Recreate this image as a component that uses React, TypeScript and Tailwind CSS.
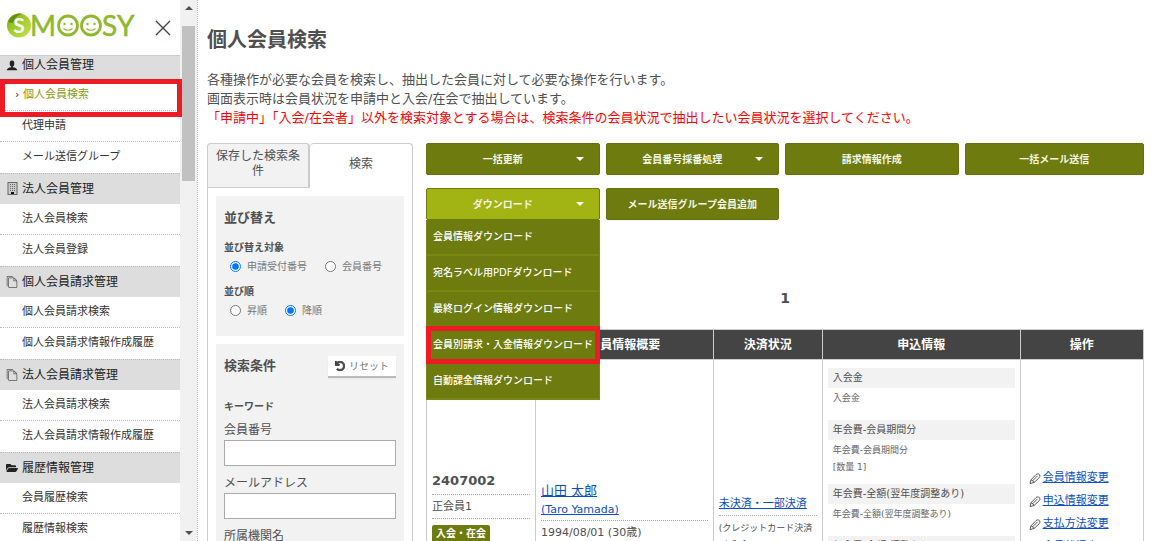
import type { ReactNode } from 'react'
import clsx from 'clsx'
import { FaFolderOpen, FaUndo } from 'react-icons/fa'
import { ImFilesEmpty, ImUser } from 'react-icons/im'

interface MenuGroup {
  title: string
  icon: ReactNode
  items: string[]
}

function BuildingIcon() {
  return (
    <svg viewBox="0 0 11 13" className="w-[11px] h-[13px]" fill="none">
      <rect x="1" y="0.5" width="9" height="12" fill="#ccc" stroke="#666" />
      <path
        d="M3 2.500h1M5 2.500h1M7 2.500h1M3 4.500h1M5 4.500h1M7 4.500h1M3 6.500h1M5 6.500h1M7 6.500h1M3 8.500h1M5 8.500h1M7 8.500h1"
        stroke="#666"
      />
      <rect x="4" y="10" width="3" height="2" fill="#111" />
    </svg>
  )
}

function PencilIcon() {
  return (
    <svg
      viewBox="0 0 12 12"
      className="w-3 h-3 shrink-0"
      fill="none"
      stroke="#444"
      strokeWidth="0.9"
      strokeLinejoin="round"
    >
      <path d="M1 10.500l1-3.700 5-5.200q1.300-1.200 2.600-.6 1.800.8 1.300 2.500-.2.700-.8 1.300L5 9.500z" />
      <path d="M2 6.800q2 .6 3 2.700M3.600 7.800L8.600 2.800" />
    </svg>
  )
}

const menuGroups: MenuGroup[] = [
  {
    title: '個人会員管理',
    icon: <ImUser />,
    items: ['個人会員検索', '代理申請', 'メール送信グループ'],
  },
  {
    title: '法人会員管理',
    icon: <BuildingIcon />,
    items: ['法人会員検索', '法人会員登録'],
  },
  {
    title: '個人会員請求管理',
    icon: <ImFilesEmpty className="text-[#555]" />,
    items: ['個人会員請求検索', '個人会員請求情報作成履歴'],
  },
  {
    title: '法人会員請求管理',
    icon: <ImFilesEmpty className="text-[#555]" />,
    items: ['法人会員請求検索', '法人会員請求情報作成履歴'],
  },
  {
    title: '履歴情報管理',
    icon: <FaFolderOpen />,
    items: ['会員履歴検索', '履歴情報検索'],
  },
]

const downloads = [
  '会員情報ダウンロード',
  '宛名ラベル用PDFダウンロード',
  '最終ログイン情報ダウンロード',
  '会員別請求・入金情報ダウンロード',
  '自動課金情報ダウンロード',
]

const fees = [
  { title: '入会金', lines: ['入会金'] },
  { title: '年会費-会員期間分', lines: ['年会費-会員期間分', '[数量 1]'] },
  { title: '年会費-全額(翌年度調整あり)', lines: ['年会費-全額(翌年度調整あり)'] },
  { title: '年会費-全額(調整なし)', lines: ['年会費-全額(調整なし)'] },
]

const operations = [
  '会員情報変更',
  '申込情報変更',
  '支払方法変更',
  '会員状況変更',
]

function Logo() {
  return (
    <svg viewBox="0 0 130 42" className="w-[130px] h-[42px]" role="img" aria-label="SMOOSY">
      <defs>
        <linearGradient id="ball" x1="0" y1="0" x2="1" y2="1">
          <stop offset="0" stopColor="#7da510" />
          <stop offset="0.5" stopColor="#a3cf2e" />
          <stop offset="1" stopColor="#c3e356" />
        </linearGradient>
      </defs>
      <circle cx="12" cy="19.500" r="12" fill="url(#ball)" />
      <path d="M1 16A12 12 0 0 1 15 7.800Q8 10 6 17z" fill="#6b8f0a" />
      <g fontFamily="Lato, sans-serif" fill="#8fb92c">
        <text x="12" y="27" fontSize="21" fontWeight="700" textAnchor="middle" fill="#fff">
          S
        </text>
        <g fontSize="28" stroke="#8fb92c" strokeWidth="0.5">
          <text x="23" y="30">
            M
          </text>
          <text x="95" y="30">
            S
          </text>
          <text x="110" y="30">
            Y
          </text>
        </g>
      </g>
      <g fill="none" stroke="#8fb92c" strokeWidth="2.800">
        <circle cx="61" cy="19.500" r="9.500" />
        <circle cx="84" cy="19.500" r="9.500" />
        <path d="M56.500 22.500q4.500 3.500 9 0M79.500 22.500q4.500 3.500 9 0" strokeWidth="1.200" />
      </g>
      <g fill="#8fb92c">
        <circle cx="57.500" cy="18" r="1.200" />
        <circle cx="64.500" cy="18" r="1.200" />
        <circle cx="80.500" cy="18" r="1.200" />
        <circle cx="87.500" cy="18" r="1.200" />
      </g>
    </svg>
  )
}

function Sidebar() {
  return (
    <aside className="w-[198px] shrink-0 h-full flex overflow-hidden border-r border-dotted border-[#bbb]">
      <div className="w-[180px] shrink-0">
        <div className="h-14 pl-[7px] pr-2 pb-[2px] flex items-center justify-between border-b border-[#ccc]">
          <Logo />
          <button type="button" aria-label="閉じる" className="pt-[2px] drop-shadow-md">
            <svg viewBox="0 0 18 18" className="w-[18px] h-[18px]" stroke="#444" strokeWidth="1.400">
              <path d="M2 2l14 14M16 2L2 16" />
            </svg>
          </button>
        </div>
        <nav>
          {menuGroups.map((group, groupIndex) => (
            <section key={group.title}>
              <h2
                className={clsx(
                  'pl-[6px] flex items-center gap-1 bg-[#ddd] text-xs text-[#222]',
                  groupIndex === 0
                    ? 'h-6 pb-[6px]'
                    : 'h-[31px] pb-px border-t border-dotted border-[#bbb]'
                )}
              >
                <span className="w-3 flex justify-center">{group.icon}</span>
                {group.title}
              </h2>
              <ul>
                {group.items.map((item, index) => {
                  const active = groupIndex === 0 && index === 0
                  return (
                    <li
                      key={item}
                      className={clsx(
                        'relative h-[31px] text-[11px] leading-[30px]',
                        index < group.items.length - 1 &&
                          'border-b border-dotted border-[#bbb]'
                      )}
                    >
                      <a
                        href="#"
                        className={clsx(
                          'block',
                          active ? 'pl-[15px] text-[#8a9a10]' : 'pl-[22px] text-[#333]'
                        )}
                      >
                        {active && (
                          <span className="inline-block w-2 text-[#333]">›</span>
                        )}
                        {item}
                      </a>
                      {active && (
                        <span className="absolute z-10 left-0 -right-[2px] -top-px h-[38px] border-5 border-[#ed1c24]" />
                      )}
                    </li>
                  )
                })}
              </ul>
            </section>
          ))}
        </nav>
      </div>
      <div className="w-[17px] h-full py-1 flex flex-col items-center bg-[#f1f1f1]">
        <span className="border-x-4 border-x-transparent border-b-4 border-b-[#505050] mt-[2px]" />
        <span className="mt-4 w-[13px] h-[155px] bg-[#c1c1c1]" />
        <span className="border-x-4 border-x-transparent border-t-4 border-t-[#505050] mt-auto mb-[2px]" />
      </div>
    </aside>
  )
}

interface RadioGroupProps {
  legend: string
  name: string
  options: string[]
  selected: string
}

function RadioGroup({ legend, name, options, selected }: RadioGroupProps) {
  return (
    <fieldset className="pt-2 text-[10px]">
      <legend className="float-left w-full font-bold leading-5">{legend}</legend>
      <div className="clear-both flex gap-[18px] pl-[6px] h-4 items-center text-[#777]">
        {options.map((option) => (
          <label key={option} className="flex items-center gap-[6px]">
            <input
              type="radio"
              name={name}
              defaultChecked={option === selected}
              className="w-[11px] h-[11px] m-0 accent-[#0075ff]"
            />
            {option}
          </label>
        ))}
      </div>
    </fieldset>
  )
}

function TextField({ label, id }: { label: string; id: string }) {
  return (
    <div className="mb-[5px]">
      <label htmlFor={id} className="block pt-[2px] text-xs leading-5">
        {label}
      </label>
      <input
        id={id}
        type="text"
        className="block w-full h-[26px] px-1 bg-white border border-[#aaa] text-xs"
      />
    </div>
  )
}

function SearchPanel() {
  return (
    <div className="w-[206px] shrink-0">
      <div className="flex h-[45px] text-xs leading-[15px] text-center">
        <button
          type="button"
          className="w-1/2 px-2 pb-1 rounded-t-sm border border-r-2 border-[#ccc] bg-[#f2f2f2]"
        >
          保存した検索条件
        </button>
        <button
          type="button"
          className="w-1/2 pb-1 rounded-t-sm border border-b-0 border-l-0 border-[#ccc] bg-white"
        >
          検索
        </button>
      </div>
      <div className="border-x border-[#ccc] p-2 flex flex-col gap-2">
        <section className="h-[140px] px-2 pt-3 bg-[#f2f2f2]">
          <h2 className="mb-[2px] text-[13px] leading-5 font-bold">並び替え</h2>
          <RadioGroup
            legend="並び替え対象"
            name="sortKey"
            options={['申請受付番号', '会員番号']}
            selected="申請受付番号"
          />
          <RadioGroup
            legend="並び順"
            name="sortOrder"
            options={['昇順', '降順']}
            selected="降順"
          />
        </section>
        <section className="px-2 pt-3 bg-[#f2f2f2]">
          <div className="flex justify-between items-start">
            <h2 className="text-[13px] leading-5 font-bold">検索条件</h2>
            <button
              type="button"
              className="h-[22px] px-[7px] flex items-center gap-1 bg-white border-b-2 border-[#bbb] text-[10px] text-[#777] shadow-xs"
            >
              <FaUndo strokeWidth={50} className="text-[#444]" />
              リセット
            </button>
          </div>
          <h3 className="mt-[19px] mb-px text-[10px] leading-5 font-bold">キーワード</h3>
          <TextField label="会員番号" id="memberNo" />
          <TextField label="メールアドレス" id="mail" />
          <TextField label="所属機関名" id="organization" />
        </section>
      </div>
    </div>
  )
}

interface ActionButtonProps {
  label: string
  hasMenu?: boolean
  open?: boolean
}

function ActionButton({ label, hasMenu, open }: ActionButtonProps) {
  return (
    <button
      type="button"
      className={clsx(
        'w-full h-8 px-[15px] flex items-center gap-3 rounded-xs border text-[10px] font-bold text-[#f4f6e4] shadow-xs',
        open ? 'bg-[#a2b314] border-[#6e7b0e]' : 'bg-[#6e7b0e] border-[#66720d]'
      )}
    >
      <span className="flex-1 whitespace-nowrap">{label}</span>
      {hasMenu && (
        <span className="border-x-4 border-x-transparent border-t-4 border-t-white" />
      )}
    </button>
  )
}

function ActionBar() {
  return (
    <div className="grid grid-cols-[29fr_29fr_29fr_30fr] gap-x-[6px] gap-y-[13px]">
      <ActionButton label="一括更新" hasMenu />
      <ActionButton label="会員番号採番処理" hasMenu />
      <ActionButton label="請求情報作成" />
      <ActionButton label="一括メール送信" />
      <div className="relative">
        <ActionButton label="ダウンロード" hasMenu open />
        <ul className="absolute z-10 top-full inset-x-0 bg-[#6e7b0e] border-x border-[#7a8813]">
          {downloads.map((item, index) => (
            <li
              key={item}
              className="relative h-9 border-b-2 border-[#7a8813] text-[10px] leading-[34px] font-medium text-white"
            >
              <a href="#" className="block pl-[6px] whitespace-nowrap">
                {item}
              </a>
              {index === 3 && (
                <span className="absolute -inset-x-px -top-[2px] h-[38px] border-5 border-[#ed1c24]" />
              )}
            </li>
          ))}
        </ul>
      </div>
      <ActionButton label="メール送信グループ会員追加" />
    </div>
  )
}

const headCell = 'h-[30px] border border-[#ccc] text-xs font-bold text-white'
const bodyCell = 'border border-[#ccc] px-[5px] align-top'
const link = 'text-[#0b4fc8] underline'

function MemberTable() {
  return (
    <table className="w-full table-fixed border-collapse">
      <thead className="bg-[#444]">
        <tr>
          <th className={clsx(headCell, 'w-[15.2%]')} aria-label="会員番号" />
          <th className={clsx(headCell, 'w-[24.8%]')}>会員情報概要</th>
          <th className={clsx(headCell, 'w-[15.2%]')}>決済状況</th>
          <th className={clsx(headCell, 'w-[27.6%]')}>申込情報</th>
          <th className={clsx(headCell, 'w-[17.2%]')}>操作</th>
        </tr>
      </thead>
      <tbody>
        <tr>
          <td className={clsx(bodyCell, 'pt-28')}>
            <p className="h-[23px] text-[13px] leading-[18px] font-bold border-b border-dotted border-[#aaa]">
              2407002
            </p>
            <p className="h-6 text-[11px] leading-6 border-b border-dotted border-[#aaa]">
              正会員1
            </p>
            <span className="mt-[6px] inline-block px-1 rounded-xs bg-[#6e7b0e] text-[10px] leading-[18px] font-bold text-white">
              入会・在会
            </span>
          </td>
          <td className={clsx(bodyCell, 'pt-[121px]')}>
            <p className="text-[13px] leading-5">
              <a href="#" className={link}>
                山田 太郎
              </a>
            </p>
            <p className="h-5 text-[11px] leading-[18px] border-b border-dotted border-[#aaa]">
              <a href="#" className={link}>
                (Taro Yamada)
              </a>
            </p>
            <p className="text-[11px] leading-6">1994/08/01 (30歳)</p>
          </td>
          <td className={clsx(bodyCell, 'pt-[134px]')}>
            <p className="h-[22px] text-[11px] leading-5 border-b border-dotted border-[#aaa]">
              <a href="#" className={link}>
                未決済・一部決済
              </a>
            </p>
            <p className="pt-1 text-[9px] leading-[17px]">
              (クレジットカード決済
              <br />
              /未入金)
            </p>
          </td>
          <td className={clsx(bodyCell, 'pt-2')}>
            {fees.map((fee, index) => (
              <dl key={fee.title} className={index === 1 ? 'mb-2' : 'mb-[13px]'}>
                <dt className="px-[5px] bg-[#f2f2f2] text-[10px] leading-5">{fee.title}</dt>
                <dd className="px-[5px] pt-[2px] text-[9px] leading-[17px] text-[#666]">
                  {fee.lines.map((line) => (
                    <p key={line}>{line}</p>
                  ))}
                </dd>
              </dl>
            ))}
          </td>
          <td className={clsx(bodyCell, 'pt-[107px]')}>
            <ul className="pl-[3px]">
              {operations.map((operation) => (
                <li key={operation} className="h-[23px] flex items-center gap-[2px] text-[11px]">
                  <PencilIcon />
                  <a href="#" className={link}>
                    {operation}
                  </a>
                </li>
              ))}
            </ul>
          </td>
        </tr>
      </tbody>
    </table>
  )
}

function App() {
  return (
    <div className="h-screen flex overflow-hidden bg-white text-[#505050] font-['DejaVu_Sans','Noto_Sans_CJK_JP',sans-serif]">
      <Sidebar />
      <main className="flex-1 min-w-0 h-full overflow-hidden pl-[9px] pr-[10px] pt-[25px]">
        <h1 className="text-xl leading-[30px] font-bold">個人会員検索</h1>
        <div className="mt-[15px] text-[13px] leading-[19px]">
          <p>各種操作が必要な会員を検索し、抽出した会員に対して必要な操作を行います。</p>
          <p>画面表示時は会員状況を申請中と入会/在会で抽出しています。</p>
          <p className="text-[#f00]">
            「申請中」「入会/在会者」以外を検索対象とする場合は、検索条件の会員状況で抽出したい会員状況を選択してください。
          </p>
        </div>
        <div className="mt-4 flex gap-[13px]">
          <SearchPanel />
          <div className="flex-1 min-w-0">
            <ActionBar />
            <p className="mt-[68px] mb-[21px] text-center text-sm leading-5 font-bold">1</p>
            <MemberTable />
          </div>
        </div>
      </main>
    </div>
  )
}

export default App
